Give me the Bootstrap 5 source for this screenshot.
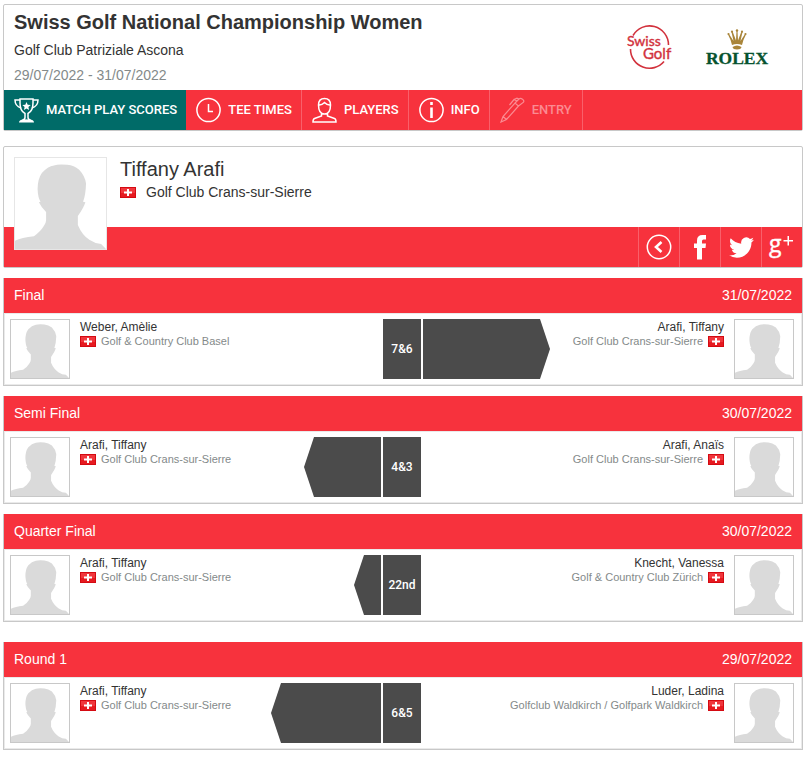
<!DOCTYPE html>
<html lang="en">
<head>
<meta charset="utf-8">
<meta name="viewport" content="width=device-width, initial-scale=1">
<title>Swiss Golf National Championship Women</title>
<link href="https://cdn.jsdelivr.net/npm/bootstrap@5.3.0/dist/css/bootstrap.min.css" rel="stylesheet">
<style>
:root { --sg-red: #f7323d; --sg-teal: #006b68; --sg-line: #c8c8c8; }
body { font-family: "Liberation Sans", Arial, sans-serif; font-size: 14px; color: #333; background: #fff; }
.page-wrap { padding: 4px 5px 8px 3px; }
.panel { border: 1px solid var(--sg-line); border-radius: 2px; }
.event-info { padding: 5px 10px 2px; }
.event-info h1 { font-size: 20px; line-height: 24px; margin: 0 0 4px; font-weight: 700; }
.event-info p { line-height: 25px; margin: 0; }
.muted { color: #848a8a; }
.logos { gap: 27px; padding: 6px 21px 0; }
.event-nav { background: var(--sg-red); font: 500 13px/40px Roboto, sans-serif; }
.event-nav a { color: #fff; text-decoration: none; padding: 0 9px 0 10px; gap: 7px; height: 40px; border-right: 1px solid #f9606a; }
.event-nav a.current { background: var(--sg-teal); border-color: var(--sg-teal); padding-right: 8px; }
.event-nav a.off { color: #fb8b92; padding-right: 10px; }
.event-nav svg { width: 25px; height: 26px; }
svg.line { fill: none; stroke: currentColor; stroke-width: 1.5; }
.profile { margin-top: 15px; }
.profile-top { padding: 10px 10px 0; gap: 13px; }
.profile h2 { font-size: 20px; line-height: 24px; margin: 0 0 1px; font-weight: 400; }
.profile p { line-height: 20px; margin: 0; gap: 10px; }
.face { background: #fff; border: 1px solid var(--sg-line); width: 60px; height: 60px; flex: none; }
.face-lg { width: 93px; height: 93px; border-color: #e6e6e6; margin-bottom: -23px; position: relative; }
.flag { width: 16px; height: 11px; flex: none; }
.profile-bar { background: var(--sg-red); height: 40px; }
.profile-bar a { width: 41px; border-left: 1px solid #f9606a; color: #fff; }
.matches { margin-top: 10px; }
.matches.later { margin-top: 20px; }
.match { border: 1px solid var(--sg-line); border-top: 0; margin-bottom: 10px; }
.match header { background: var(--sg-red); color: #fff; padding: 0 10px; line-height: 35px; }
.match h3 { font-size: 14px; line-height: 35px; margin: 0; font-weight: 400; }
.match-body { border: 1px solid #eaeaea; padding: 5px 7px 5px 5px; gap: 2px; }
.player { gap: 10px; font-size: 12px; line-height: 16px; }
.player .club { font-size: 11px; line-height: 12px; gap: 5px; }
.score { width: 38px; background: #4b4b4b; color: #fff; font: 500 12px/60px Roboto, sans-serif; text-align: center; flex: none; }
.lead-bar { height: 60px; background: #4b4b4b; flex: none; }
.lead-l { clip-path: polygon(10px 0, 100% 0, 100% 100%, 10px 100%, 0 50%); }
.lead-r { clip-path: polygon(0 0, calc(100% - 10px) 0, 100% 50%, calc(100% - 10px) 100%, 0 100%); }
</style>
<script src="https://cdn.jsdelivr.net/npm/bootstrap@5.3.0/dist/js/bootstrap.bundle.min.js"></script>
</head>
<body>
<svg width="0" height="0" class="d-none" aria-hidden="true">
  <symbol id="face" viewBox="0 0 278 278"><path fill="#dadada" d="M0 278V253Q20 243 58 239Q78 225 88 208Q95 198 95 190V165Q80 150 73 135L78 134Q70 122 69 95Q69 65 82 46Q100 26 119 23Q132 18 160 21Q180 22 196 36Q214 55 217 78Q216 112 208 134L215 135Q210 152 192 177V205Q205 236 227 250Q245 262 263 263L278 278Z"/></symbol>
  <symbol id="ch" viewBox="0 0 16 11"><path fill="#d40a12" d="M0 0h16v11H0z"/><path fill="#f0363c" d="M1 1h14v9H1z"/><path fill="#e61a20" d="M1 6h14v4H1z"/><path fill="#fff" d="M7 2h2v2.500h3v2H9V9H7V6.500H4v-2h3z"/></symbol>
</svg>
<main class="page-wrap">
  <section class="panel">
    <div class="event-info d-flex justify-content-between">
      <div>
        <h1>Swiss Golf National Championship Women</h1>
        <p>Golf Club Patriziale Ascona</p>
        <p class="muted">29/07/2022 - 31/07/2022</p>
      </div>
      <div class="logos d-flex align-items-start">
        <svg width="50" height="64" viewBox="0 -11 50 64" role="img" aria-label="Swiss Golf">
          <g fill="none" stroke="#d2323d" stroke-width="1.600"><path d="M7 8.500A19 19 0 0 1 42.500 18"/><path d="M4.500 22A19 19 0 0 0 38 34.500"/></g>
          <g fill="#d2323d" stroke="#d2323d" stroke-width=".4" font-family="Lato, sans-serif"><text x="1" y="19" font-size="14">Swiss</text><text x="17" y="32" font-size="15">Golf</text></g>
        </svg>
        <svg width="68" height="64" viewBox="0 -12 68 64" role="img" aria-label="Rolex">
          <g fill="#a9853a"><path d="M29 17Q28 12 25 6.500L26 6 30.500 13 28.500 4H29.800L33 12.500 33.500 3H34.500L35 12.500 38.200 4H39.500L37.500 13 42 6 43 6.500Q40 12 39 17 34 15 29 17Z"/><path d="M29.500 19q4.500-3 9 0-.5 2.500-4.500 2.500T29.500 19z"/><circle cx="25.500" cy="6" r="1.100"/><circle cx="29" cy="3.700" r="1.100"/><circle cx="34" cy="2.500" r="1.200"/><circle cx="39" cy="3.700" r="1.100"/><circle cx="42.500" cy="6" r="1.100"/></g>
          <text x="34" y="36" text-anchor="middle" fill="#06532f" stroke="#06532f" stroke-width=".3" font-family="Liberation Serif, serif" font-weight="700" font-size="17.500">ROLEX</text>
        </svg>
      </div>
    </div>
    <nav class="event-nav d-flex flex-wrap">
      <a class="current d-flex align-items-center" href="#"><svg class="line" viewBox="0 0 25 26"><path d="M6 2h13v4q0 8-5 10.500v4q0 2 3 3H8q3-1 3-3v-4Q6 14 6 6z"/><path d="M6 3H1q0 6 6 8M19 3h5q0 6-6 8"/><path fill="currentColor" stroke="none" d="M12.500 5l1.200 2.800 3 .2-2.300 2 .7 3-2.600-1.600L9.900 13l.7-3-2.300-2 3-.2zM5 25.500q0-3 5-3h5q5 0 5 3z"/></svg>MATCH PLAY SCORES</a>
      <a class="d-flex align-items-center" href="#"><svg class="line" viewBox="0 0 25 26"><circle cx="12.500" cy="13" r="11.600"/><path d="M12.500 7v7.500H17"/></svg>TEE TIMES</a>
      <a class="d-flex align-items-center" href="#"><svg class="line" viewBox="0 0 25 26"><path d="M12.500 1.500c-4 0-6 2.500-6 6.500 0 5 2 9 6 9s6-4 6-9c0-4-2-6.500-6-6.500zM6.500 8q3 .5 6-2.500 3 3 6 2.500M9.500 16v3l-7 2.500Q1 22 1 25h23q0-3-1.500-3.500l-7-2.500v-3"/></svg>PLAYERS</a>
      <a class="d-flex align-items-center" href="#"><svg class="line" viewBox="0 0 25 26"><circle cx="12.500" cy="13" r="11.600"/><path stroke-width="2.600" d="M12.500 10.500V21M12.500 5v3"/></svg>INFO</a>
      <a class="off d-flex align-items-center" href="#" aria-disabled="true"><svg class="line" viewBox="0 0 25 26"><path stroke-width="1.200" d="M1 25l2-5.500L15 6l3.500 3L6.500 22.500zM3 19.500l3.500 3M15 6l4-4q1.500-1.200 3.500.2t1 3L18.500 9M17 4L14 2.500 9.500 8M19 2l-2-.8L14 2.500"/></svg>ENTRY</a>
    </nav>
  </section>

  <section class="panel profile">
    <div class="profile-top d-flex">
      <svg class="face face-lg"><use href="#face"/></svg>
      <div>
        <h2>Tiffany Arafi</h2>
        <p class="d-flex align-items-center"><svg class="flag"><use href="#ch"/></svg>Golf Club Crans-sur-Sierre</p>
      </div>
    </div>
    <div class="profile-bar d-flex justify-content-end">
      <a class="d-flex align-items-center justify-content-center" href="#" aria-label="Back"><svg class="line" width="26" height="26" viewBox="0 0 26 26"><circle cx="13" cy="13" r="11.700"/><path stroke-width="2.600" d="M15.500 8l-5.500 5 5.500 5"/></svg></a>
      <a class="d-flex align-items-center justify-content-center" href="#" aria-label="Facebook"><svg width="26" height="26" viewBox="0 0 26 26" fill="currentColor"><path d="M10 25.500V14H7V9.500h3V6.500Q10 1 15.500 1H19v4.500h-2.500Q15 5.500 15 7v2.500h4L18.500 14H15v11.500z"/></svg></a>
      <a class="d-flex align-items-center justify-content-center" href="#" aria-label="Twitter"><svg width="25" height="25" viewBox="0 1 24 22" fill="currentColor"><path d="M23.950 4.570a10 10 0 0 1-2.820.77 4.960 4.960 0 0 0 2.160-2.720c-.95.550-2 .950-3.130 1.180a4.920 4.920 0 0 0-8.380 4.480C7.690 8.090 4.070 6.130 1.640 3.160a4.820 4.820 0 0 0-.67 2.480c0 1.710.87 3.210 2.190 4.100a4.900 4.900 0 0 1-2.230-.62v.06a4.920 4.920 0 0 0 3.950 4.830 5 5 0 0 1-2.210.08 4.940 4.940 0 0 0 4.600 3.420A9.870 9.870 0 0 1 0 19.540a13.990 13.990 0 0 0 7.550 2.210c9.050 0 14-7.500 14-13.980 0-.21 0-.42-.02-.63a9.940 9.940 0 0 0 2.420-2.570z"/></svg></a>
      <a class="d-flex align-items-center justify-content-center" href="#" aria-label="Google Plus"><svg width="28" height="40" viewBox="0 -7 28 40" fill="currentColor"><text x="1" y="18" font-family="Open Sans, sans-serif" font-size="23" stroke="currentColor" stroke-width=".4">g</text><path d="M19.500 2h1.500v4h4v1.500h-4v4h-1.500v-4h-4V6h4z"/></svg></a>
    </div>
  </section>

  <div class="matches">
    <article class="match">
      <header class="d-flex justify-content-between"><h3>Final</h3><time>31/07/2022</time></header>
      <div class="match-body d-flex">
        <div class="player d-flex flex-fill w-50">
          <svg class="face"><use href="#face"/></svg>
          <div class="text-nowrap"><div>Weber, Amèlie</div><div class="club muted d-flex align-items-center"><svg class="flag"><use href="#ch"/></svg>Golf &amp; Country Club Basel</div></div>
        </div>
        <div class="score">7&amp;6</div>
        <div class="player d-flex flex-fill w-50">
          <div class="lead-bar lead-r" style="width:127px"></div>
          <div class="text-nowrap text-end ms-auto"><div>Arafi, Tiffany</div><div class="club muted d-flex align-items-center justify-content-end">Golf Club Crans-sur-Sierre<svg class="flag"><use href="#ch"/></svg></div></div>
          <svg class="face"><use href="#face"/></svg>
        </div>
      </div>
    </article>
    <article class="match">
      <header class="d-flex justify-content-between"><h3>Semi Final</h3><time>30/07/2022</time></header>
      <div class="match-body d-flex">
        <div class="player d-flex flex-fill w-50">
          <svg class="face"><use href="#face"/></svg>
          <div class="text-nowrap"><div>Arafi, Tiffany</div><div class="club muted d-flex align-items-center"><svg class="flag"><use href="#ch"/></svg>Golf Club Crans-sur-Sierre</div></div>
          <div class="lead-bar lead-l ms-auto" style="width:77px"></div>
        </div>
        <div class="score">4&amp;3</div>
        <div class="player d-flex flex-fill w-50">
          <div class="text-nowrap text-end ms-auto"><div>Arafi, Anaïs</div><div class="club muted d-flex align-items-center justify-content-end">Golf Club Crans-sur-Sierre<svg class="flag"><use href="#ch"/></svg></div></div>
          <svg class="face"><use href="#face"/></svg>
        </div>
      </div>
    </article>
    <article class="match">
      <header class="d-flex justify-content-between"><h3>Quarter Final</h3><time>30/07/2022</time></header>
      <div class="match-body d-flex">
        <div class="player d-flex flex-fill w-50">
          <svg class="face"><use href="#face"/></svg>
          <div class="text-nowrap"><div>Arafi, Tiffany</div><div class="club muted d-flex align-items-center"><svg class="flag"><use href="#ch"/></svg>Golf Club Crans-sur-Sierre</div></div>
          <div class="lead-bar lead-l ms-auto" style="width:27px"></div>
        </div>
        <div class="score">22nd</div>
        <div class="player d-flex flex-fill w-50">
          <div class="text-nowrap text-end ms-auto"><div>Knecht, Vanessa</div><div class="club muted d-flex align-items-center justify-content-end">Golf &amp; Country Club Zürich<svg class="flag"><use href="#ch"/></svg></div></div>
          <svg class="face"><use href="#face"/></svg>
        </div>
      </div>
    </article>
  </div>
  <div class="matches later">
    <article class="match">
      <header class="d-flex justify-content-between"><h3>Round 1</h3><time>29/07/2022</time></header>
      <div class="match-body d-flex">
        <div class="player d-flex flex-fill w-50">
          <svg class="face"><use href="#face"/></svg>
          <div class="text-nowrap"><div>Arafi, Tiffany</div><div class="club muted d-flex align-items-center"><svg class="flag"><use href="#ch"/></svg>Golf Club Crans-sur-Sierre</div></div>
          <div class="lead-bar lead-l ms-auto" style="width:110px"></div>
        </div>
        <div class="score">6&amp;5</div>
        <div class="player d-flex flex-fill w-50">
          <div class="text-nowrap text-end ms-auto"><div>Luder, Ladina</div><div class="club muted d-flex align-items-center justify-content-end">Golfclub Waldkirch / Golfpark Waldkirch<svg class="flag"><use href="#ch"/></svg></div></div>
          <svg class="face"><use href="#face"/></svg>
        </div>
      </div>
    </article>
  </div>
</main>
</body>
</html>
